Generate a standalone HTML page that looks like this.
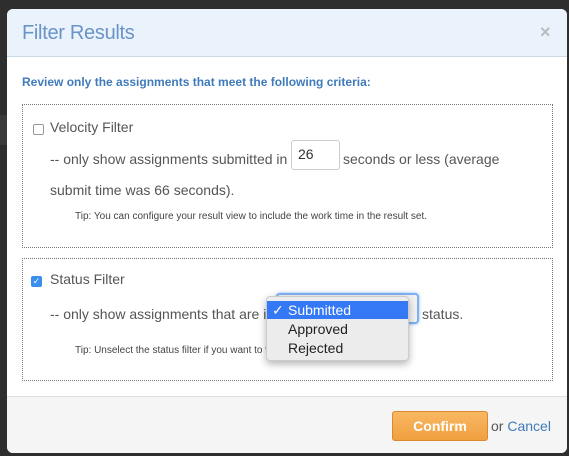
<!DOCTYPE html>
<html><head><meta charset="utf-8"><style>
*{box-sizing:border-box;margin:0;padding:0}
html,body{width:569px;height:456px}
body{background:#2e2e2e;position:relative;overflow:hidden;font-family:"Liberation Sans",Arial,sans-serif;color:#555}
.a{position:absolute;white-space:nowrap}
.modal{position:absolute;left:7px;top:9px;width:560px;height:444px;background:#fff;border-radius:6px;overflow:hidden}
.hdr{position:absolute;left:0;top:0;width:560px;height:48px;background:#eaf2fc;border-bottom:1px solid #c9d9e8}
.ftr{position:absolute;left:0;top:387px;width:560px;height:60px;background:#f5f5f5;border-top:1px solid #ddd}
.box{position:absolute;border:1px dotted #777}
.t{font-size:14px;line-height:16px}
.tip{font-size:10px;line-height:12px;color:#444}
</style></head><body>
<div class="a" style="left:0;top:115px;width:7px;height:30px;background:#3a3a3a"></div>
<div class="modal">
 <div class="hdr"></div>
 <div class="a" style="left:15px;top:13px;font-size:20px;font-weight:300;color:#6a93c6;letter-spacing:-0.3px">Filter Results</div>
 <div class="a" style="left:533px;top:13px;font-size:18px;font-weight:bold;color:#bbb">×</div>
 <div class="a" style="left:15px;top:66px;font-size:12px;font-weight:bold;color:#3f7bbb">Review only the assignments that meet the following criteria:</div>
 <div class="box" style="left:15px;top:95px;width:531px;height:144px"></div>
 <div class="a" style="left:26px;top:115px;width:11px;height:11px;border:1px solid #999;border-radius:2px;background:#fff"></div>
 <div class="a t" style="left:43px;top:110px">Velocity Filter</div>
 <div class="a t" style="left:43px;top:142px">-- only show assignments submitted in</div>
 <div class="a" style="left:284px;top:131px;width:49px;height:30px;border:1px solid #ccc;border-radius:3px"></div>
 <div class="a t" style="left:291px;top:137px;color:#333">26</div>
 <div class="a t" style="left:336px;top:142px">seconds or less (average</div>
 <div class="a t" style="left:43px;top:173px">submit time was 66 seconds).</div>
 <div class="a tip" style="left:68px;top:202px">Tip: You can configure your result view to include the work time in the result set.</div>
 <div class="box" style="left:15px;top:249px;width:531px;height:123px"></div>
 <div class="a" style="left:24px;top:267px;width:11px;height:11px;border-radius:2px;background:#3a8ef0;color:#fff;font-size:9px;line-height:11px;text-align:center">✓</div>
 <div class="a t" style="left:43px;top:262px">Status Filter</div>
 <div class="a t" style="left:43px;top:297px">-- only show assignments that are i</div>
 <div class="a" style="left:269px;top:284px;width:143px;height:31px;border:2px solid #7fb0f0;border-radius:4px;background:#f2f2f2;box-shadow:0 0 3px #8ab8f5"></div>
 <div class="a t" style="left:415px;top:297px">status.</div>
 <div class="a tip" style="left:68px;top:336px">Tip: Unselect the status filter if you want to v</div>
 <div class="a" style="left:259px;top:287px;width:143px;height:65px;background:#ececec;border:1px solid #ccc;border-radius:4px;box-shadow:0 3px 8px rgba(0,0,0,.3);overflow:hidden">
  <div style="position:absolute;left:0;top:4px;width:143px;height:18px;background:#3478f6"></div>
  <div class="a t" style="left:5px;top:5px;color:#fff">✓</div>
  <div class="a t" style="left:21px;top:5px;color:#fff">Submitted</div>
  <div class="a t" style="left:21px;top:24px;color:#222">Approved</div>
  <div class="a t" style="left:21px;top:43px;color:#222">Rejected</div>
 </div>
 <div class="ftr"></div>
 <div class="a" style="left:385px;top:402px;width:96px;height:30px;border:1px solid #d98a2e;border-radius:3px;background:linear-gradient(#f9b863,#f0a040);color:#fff;font-size:14px;font-weight:bold;line-height:28px;text-align:center">Confirm</div>
 <div class="a t" style="left:484px;top:409px">or <span style="color:#3f7bbb">Cancel</span></div>
</div>
</body></html>
